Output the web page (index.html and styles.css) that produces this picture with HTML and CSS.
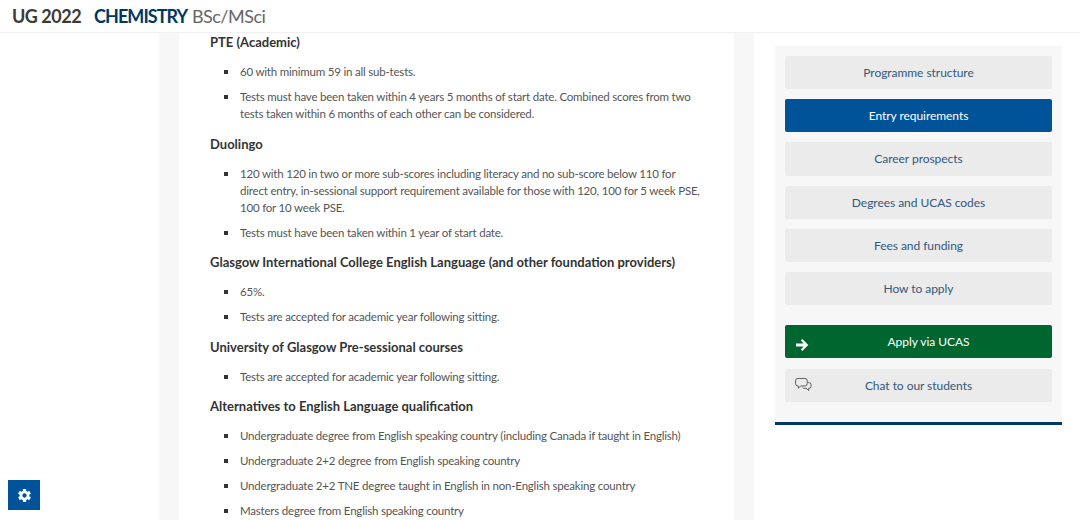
FILE: index.html
```html
<!DOCTYPE html>
<html lang="en">
<head>
<meta charset="utf-8">
<title>UG 2022 Chemistry BSc/MSci</title>
<link rel="stylesheet" href="styles.css">
</head>
<body>
<header class="topbar">
  <span class="year">UG 2022</span>
  <span class="subject"><strong>CHEMISTRY</strong> <span class="degree">BSc/MSci</span></span>
</header>
<div class="page">
  <div class="gutter">
    <button class="settings" aria-label="Settings">
      <svg viewBox="-12 -12 24 24" width="13" height="13"><g fill="#fff"><rect x="-3" y="-12" width="6" height="6" rx="1"/><rect x="-3" y="-12" width="6" height="6" rx="1" transform="rotate(60)"/><rect x="-3" y="-12" width="6" height="6" rx="1" transform="rotate(120)"/><rect x="-3" y="-12" width="6" height="6" rx="1" transform="rotate(180)"/><rect x="-3" y="-12" width="6" height="6" rx="1" transform="rotate(240)"/><rect x="-3" y="-12" width="6" height="6" rx="1" transform="rotate(300)"/></g><circle r="6.500" fill="none" stroke="#fff" stroke-width="5"/></svg>
    </button>
  </div>
  <main class="content">
    <h3>PTE (Academic)</h3>
    <ul>
      <li>60 with minimum 59 in all sub-tests.</li>
      <li>Tests must have been taken within 4 years 5 months of start date. Combined scores from two tests taken within 6 months of each other can be considered.</li>
    </ul>
    <h3>Duolingo</h3>
    <ul>
      <li>120 with 120 in two or more sub-scores including literacy and no sub-score below 110 for direct entry, in-sessional support requirement available for those with 120, 100 for 5 week PSE, 100 for 10 week PSE.</li>
      <li>Tests must have been taken within 1 year of start date.</li>
    </ul>
    <h3>Glasgow International College English Language (and other foundation providers)</h3>
    <ul>
      <li>65%.</li>
      <li>Tests are accepted for academic year following sitting.</li>
    </ul>
    <h3>University of Glasgow Pre-sessional courses</h3>
    <ul>
      <li>Tests are accepted for academic year following sitting.</li>
    </ul>
    <h3>Alternatives to English Language qualification</h3>
    <ul>
      <li>Undergraduate degree from English speaking country (including Canada if taught in English)</li>
      <li>Undergraduate 2+2 degree from English speaking country</li>
      <li>Undergraduate 2+2 TNE degree taught in English in non-English speaking country</li>
      <li>Masters degree from English speaking country</li>
    </ul>
  </main>
  <aside class="side">
    <nav class="menu">
      <a class="btn">Programme structure</a>
      <a class="btn active">Entry requirements</a>
      <a class="btn">Career prospects</a>
      <a class="btn">Degrees and UCAS codes</a>
      <a class="btn">Fees and funding</a>
      <a class="btn">How to apply</a>
      <a class="btn apply">
        <svg class="btn-icon arrow" viewBox="0 0 14 14" width="14" height="14"><path fill="#fff" d="M0 5.400h7.600L4.800 2.600 6.300 1 12.300 7 6.300 13l-1.500-1.600 2.800-2.800H0z"/></svg>
        Apply via UCAS
      </a>
      <a class="btn chat">
        <svg class="btn-icon" viewBox="0 0 18 16" width="17" height="15"><g fill="none" stroke="#555" stroke-width="1"><path d="M3 1h7.500a2.500 2.500 0 0 1 2.500 2.500v3A2.500 2.500 0 0 1 10.500 9H6l-2.500 2.500V9H3A2.500 2.500 0 0 1 .5 6.500v-3A2.500 2.500 0 0 1 3 1z"/><path d="M14 5.500h1A2 2 0 0 1 17 7.500v2a2 2 0 0 1-2 2h-.5v2.500L12 11.500H9.500a2 2 0 0 1-1.500-.7"/></g></svg>
        Chat to our students
      </a>
    </nav>
  </aside>
</div>
</body>
</html>
```
FILE: styles.css
```css
* { box-sizing: border-box; }
html, body { margin: 0; height: 520px; overflow: hidden; background: #fff; }
body { font-family: Lato, "Noto Sans", sans-serif; color: #4a4a4a; }
.topbar {
  height: 33px;
  padding-left: 12px;
  display: flex;
  align-items: center;
  gap: 13px;
  font-size: 18px;
  line-height: 33px;
  border-bottom: 1px solid #f0f0f0;
}
.year { font-weight: 700; color: #3a3a3a; letter-spacing: -0.5px; }
.subject strong { color: #003865; font-weight: 700; letter-spacing: -0.95px; }
.degree { color: #666; letter-spacing: -0.5px; }
.page { display: flex; height: 487px; overflow: hidden; }
.gutter { width: 159px; position: relative; }
.settings {
  position: absolute; left: 8px; top: 447px;
  width: 32px; height: 30px; padding: 0; border: 0;
  background: #005398;
  display: flex; align-items: center; justify-content: center;
}
.content {
  width: 595px;
  border-left: 20px solid #f7f7f7;
  border-right: 20px solid #f7f7f7;
  padding: 0 31px;
  font-size: 11.500px;
  letter-spacing: -0.2px;
  line-height: 17px;
  color: #555;
}
.content h3 {
  margin: 0 0 12px;
  font-size: 13px;
  letter-spacing: 0;
  line-height: 18px;
  font-weight: 700;
  color: #333;
}
.content ul { list-style: none; margin: 0 0 12.500px; padding: 0 0 0 30px; }
.content li { position: relative; margin-bottom: 8px; }
.content li::before {
  content: ""; position: absolute; left: -16px; top: 7px;
  width: 4px; height: 4px; background: #333;
}
.side { width: 308px; padding: 13px 0 0 21px; }
.menu {
  width: 287px; height: 379px;
  padding: 10px;
  background: #f7f7f7;
  border-bottom: 3px solid #003865;
  display: flex; flex-direction: column; gap: 10px;
}
.btn {
  position: relative;
  height: 33.200px;
  display: flex; align-items: center; justify-content: center;
  background: #ebebeb;
  border-radius: 2px;
  font-size: 12px;
  letter-spacing: -0.05px;
  color: #34587c;
}
.btn.active { background: #005398; color: #fff; }
.btn.apply { background: #006630; color: #fff; margin-top: 10px; padding-left: 20px; }
.btn.chat { margin-top: 0.500px; }
.btn-icon { position: absolute; left: 10px; top: 50%; transform: translateY(-50%); }
.btn-icon.arrow { top: calc(50% + 3px); left: 11px; }
```
